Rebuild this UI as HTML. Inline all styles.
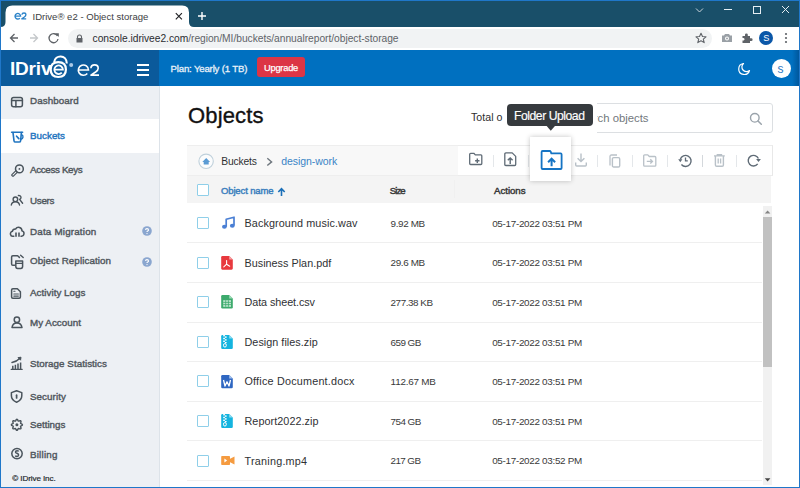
<!DOCTYPE html><html><head><meta charset="utf-8"><style>
*{box-sizing:border-box;margin:0;padding:0}
html,body{width:800px;height:488px;overflow:hidden;background:#fff;font-family:"Liberation Sans",sans-serif}
.a{position:absolute;white-space:nowrap;line-height:normal}
svg.a{overflow:visible}
</style></head><body>
<div class="a" style="left:0;top:0;width:800px;height:27px;background:#194f69"></div>
<svg class="a" style="left:0px;top:0px;" width="200" height="27" viewBox="0 0 200 27"><path d="M0.5,27 Q5.5,27 5.5,22 L5.5,12.5 Q5.5,5.6 12.4,5.6 L182.2,5.6 Q189,5.6 189,12.5 L189,22 Q189,27 194,27 Z" fill="#fff"/></svg>
<svg class="a" style="left:0px;top:0px;" width="40" height="27" viewBox="0 0 40 27"><path d="M15,16.1 H20.6 A2.8,2.8 0 1 0 19.8,18.2" stroke="#2a82c8" stroke-width="1.3" fill="none"/><path d="M21.9,14.8 Q22.1,13 24,13 Q25.9,13 25.9,14.8 Q25.9,16 24.4,17 L21.8,18.8 H26.2" stroke="#2a82c8" stroke-width="1.3" fill="none" stroke-linejoin="round"/></svg>
<div class="a" style="left:32.5px;top:10.86px;font-size:9.55px;color:#3c4043;font-weight:400;letter-spacing:0px;">IDrive® e2 - Object storage</div>
<svg class="a" style="left:174px;top:12px;" width="10" height="10" viewBox="0 0 10 10"><path d="M1.8,1.2 L7.9,7.3 M7.9,1.2 L1.8,7.3" stroke="#202124" stroke-width="1.15"/></svg>
<svg class="a" style="left:197px;top:11px;" width="10" height="10" viewBox="0 0 10 10"><path d="M5,1 V9 M1,5 H9" stroke="#fff" stroke-width="1.4"/></svg>
<svg class="a" style="left:694px;top:6px;" width="100" height="10" viewBox="0 0 100 10"><path d="M2,2.5 L5.5,6 L9,2.5" stroke="#c9d3da" stroke-width="1" fill="none"/><path d="M30,3.5 H38" stroke="#e6eef3" stroke-width="1"/><rect x="59.5" y="0.5" width="7" height="7" stroke="#e6eef3" stroke-width="1" fill="none"/><path d="M88,0 L95,7 M95,0 L88,7" stroke="#e6eef3" stroke-width="1"/></svg>
<div class="a" style="left:0;top:27px;width:800px;height:23px;background:#fff"></div>
<svg class="a" style="left:8px;top:31px;" width="56" height="14" viewBox="0 0 56 14"><path d="M10,7 H2.5 M6.5,3 L2.5,7 L6.5,11" stroke="#5f6368" stroke-width="1.3" fill="none"/><path d="M22,7 H29.5 M25.5,3 L29.5,7 L25.5,11" stroke="#c4c7ca" stroke-width="1.3" fill="none"/><path d="M49.5,5 A4.5,4.5 0 1 0 50,8" stroke="#5f6368" stroke-width="1.3" fill="none"/><path d="M47,2.2 L50.8,2.2 L50.8,6 Z" fill="#5f6368"/></svg>
<div class="a" style="left:68px;top:29px;width:644px;height:19px;background:#f1f3f4;border-radius:10px"></div>
<svg class="a" style="left:75px;top:34px;" width="9" height="9" viewBox="0 0 9 9"><path d="M2.5,4 V3 A2,2 0 0 1 6.5,3 V4" stroke="#5f6368" stroke-width="1.1" fill="none"/><rect x="1.5" y="4" width="6" height="4.5" fill="#5f6368"/></svg>
<div class="a" style="left:92.6px;top:32.92px;font-size:10.25px;color:#2a2c30;font-weight:400;letter-spacing:-0.035px;">console.idrivee2.com<span style="color:#606368">/region/MI/buckets/annualreport/object-storage</span></div>
<svg class="a" style="left:694px;top:31px;" width="100" height="14" viewBox="0 0 100 14"><path d="M7,2.2 L8.5,5.5 L12,5.8 L9.3,8.1 L10.2,11.6 L7,9.7 L3.8,11.6 L4.7,8.1 L2,5.8 L5.5,5.5 Z" stroke="#5f6368" stroke-width="1.1" fill="none" stroke-linejoin="round"/><path d="M28,4.5 H30 L31,3 H35 L36,4.5 H38 V11 H28 Z" fill="#9aa0a6"/><circle cx="33" cy="7.6" r="2" fill="#fff"/><circle cx="33" cy="7.6" r="1" fill="#9aa0a6"/><path d="M48.5,5 H51 V3.8 A1.4,1.4 0 0 1 53.8,3.8 V5 H56 V7.3 H57.2 A1.4,1.4 0 0 1 57.2,10.1 H56 V12 H48.5 V9.5 H49.6 A1.3,1.3 0 0 0 49.6,7 H48.5 Z" fill="#5f6368"/><circle cx="72" cy="7" r="7" fill="#0b57a8"/><circle cx="92" cy="3" r="1.1" fill="#5f6368"/><circle cx="92" cy="7" r="1.1" fill="#5f6368"/><circle cx="92" cy="11" r="1.1" fill="#5f6368"/></svg>
<div class="a" style="left:763.2px;top:33.27px;font-size:9.2px;color:#fff;font-weight:400;letter-spacing:0px;">S</div>
<div class="a" style="left:0;top:50px;width:800px;height:36px;background:#0070c0"></div>
<div class="a" style="left:0;top:50px;width:159px;height:36px;background:#0b5a9b"></div>
<div class="a" style="left:9.9px;top:58.30px;font-size:19px;color:#fff;font-weight:700;letter-spacing:-0.15px;">IDriv</div>
<svg class="a" style="left:0px;top:50px;" width="110" height="36" viewBox="0 0 110 36"><path d="M54.2,12.2 C55,4.6 66.6,4.2 66.8,13.6" stroke="#fff" stroke-width="2.1" fill="none"/><path d="M50.7,19.6 Q50.7,12.2 58.3,12.2 Q65.9,12.2 65.9,19.6 Q65.9,27 58.3,27 Q50.7,27 50.7,19.6 Z" stroke="#fff" stroke-width="2.2" fill="none"/><path d="M54.3,19.6 H62.9 A4.3,4.3 0 1 0 61.8,22.6" stroke="#fff" stroke-width="1.8" fill="none"/><circle cx="71.2" cy="15" r="2" fill="#a9c8e6"/><path d="M78.3,20 H88.5 A5.1,5.1 0 1 0 87.3,23.4" stroke="#fff" stroke-width="1.6" fill="none"/><path d="M90.9,18.2 Q91,14.9 94.6,14.9 Q98.2,14.9 98.2,18.2 Q98.2,20.2 95.6,22 L90.9,25.1 H99" stroke="#fff" stroke-width="1.6" fill="none" stroke-linejoin="round"/></svg>
<svg class="a" style="left:137px;top:64px;" width="12" height="12" viewBox="0 0 12 12"><path d="M0,1 H12 M0,6 H12 M0,11 H12" stroke="#fff" stroke-width="1.8"/></svg>
<div class="a" style="left:170.5px;top:63.31px;font-size:9.6px;color:#e8f1f9;font-weight:400;letter-spacing:-0.16px;-webkit-text-stroke:0.3px #e8f1f9">Plan: Yearly (1 TB)</div>
<div class="a" style="left:257px;top:57px;width:48px;height:20px;background:#dc3545;border-radius:3px"></div>
<div class="a" style="left:264.0px;top:62.58px;font-size:9.3px;color:#fff;font-weight:400;letter-spacing:-0.228px;-webkit-text-stroke:0.25px #fff">Upgrade</div>
<div class="a" style="left:792px;top:50px;width:7px;height:36px;background:linear-gradient(90deg,rgba(0,40,90,0),rgba(0,40,90,0.35))"></div>
<svg class="a" style="left:737px;top:62px;" width="14" height="14" viewBox="0 0 14 14"><path d="M6.5,1.5 A5.5,5.5 0 1 0 12.5,8.5 A4.6,4.6 0 0 1 6.5,1.5 Z" stroke="#fff" stroke-width="1.2" fill="none" stroke-linejoin="round"/></svg>
<div class="a" style="left:772px;top:59px;width:19px;height:19px;background:#fff;border-radius:50%"></div>
<div class="a" style="left:777.6px;top:62.14px;font-size:12px;color:#2a78c4;font-weight:400;letter-spacing:0px;">s</div>
<div class="a" style="left:0;top:86px;width:160px;height:402px;background:#edf0f4;border-right:1px solid #dde3e9"></div>
<div class="a" style="left:0;top:119px;width:159px;height:34px;background:#fff"></div>
<div id="navs">
<div class="a" style="left:30.0px;top:95.43px;font-size:9.8px;color:#50575d;font-weight:400;letter-spacing:0.085px;-webkit-text-stroke:0.4px #50575d">Dashboard</div>
<div class="a" style="left:30.0px;top:130.33px;font-size:9.8px;color:#1f74c0;font-weight:400;letter-spacing:0.027px;-webkit-text-stroke:0.4px #1f74c0">Buckets</div>
<div class="a" style="left:30.0px;top:164.43px;font-size:9.8px;color:#50575d;font-weight:400;letter-spacing:-0.34px;-webkit-text-stroke:0.4px #50575d">Access Keys</div>
<div class="a" style="left:30.0px;top:195.13px;font-size:9.8px;color:#50575d;font-weight:400;letter-spacing:-0.27px;-webkit-text-stroke:0.4px #50575d">Users</div>
<div class="a" style="left:30.0px;top:225.83px;font-size:9.8px;color:#50575d;font-weight:400;letter-spacing:0.196px;-webkit-text-stroke:0.4px #50575d">Data Migration</div>
<div class="a" style="left:30.0px;top:255.43px;font-size:9.8px;color:#50575d;font-weight:400;letter-spacing:0.087px;-webkit-text-stroke:0.4px #50575d">Object Replication</div>
<div class="a" style="left:30.0px;top:287.43px;font-size:9.8px;color:#50575d;font-weight:400;letter-spacing:0.039px;-webkit-text-stroke:0.4px #50575d">Activity Logs</div>
<div class="a" style="left:30.0px;top:316.63px;font-size:9.8px;color:#50575d;font-weight:400;letter-spacing:0.037px;-webkit-text-stroke:0.4px #50575d">My Account</div>
<div class="a" style="left:30.0px;top:357.63px;font-size:9.8px;color:#50575d;font-weight:400;letter-spacing:0.039px;-webkit-text-stroke:0.4px #50575d">Storage Statistics</div>
<div class="a" style="left:30.0px;top:391.33px;font-size:9.8px;color:#50575d;font-weight:400;letter-spacing:0.06px;-webkit-text-stroke:0.4px #50575d">Security</div>
<div class="a" style="left:30.0px;top:419.43px;font-size:9.8px;color:#50575d;font-weight:400;letter-spacing:-0.004px;-webkit-text-stroke:0.4px #50575d">Settings</div>
<div class="a" style="left:30.0px;top:448.63px;font-size:9.8px;color:#50575d;font-weight:400;letter-spacing:0.206px;-webkit-text-stroke:0.4px #50575d">Billing</div>
</div>
<div class="a" style="left:12.3px;top:474.47px;font-size:8.1px;color:#25292d;font-weight:400;letter-spacing:-0.106px;-webkit-text-stroke:0.2px #25292d">© IDrive Inc.</div>
<svg class="a" style="left:0;top:0" width="160" height="488" viewBox="0 0 160 488">
<g fill="none" stroke="#4a545c" stroke-width="1.5" stroke-linejoin="round" stroke-linecap="round">
 <rect x="11.6" y="97.4" width="10.8" height="9.4" rx="2"/>
 <path d="M11.6,100.6 H22.4 M15.9,100.6 V106.8"/>
 <circle cx="19.4" cy="168.9" r="3.9" stroke-width="1.5"/>
 <circle cx="19.4" cy="168.9" r="0.9" fill="#4a545c" stroke="none"/>
 <path d="M16.2,170.4 L11.9,174.7 Q11.5,175.1 11.9,175.5 L12.6,176.2 Q13,176.6 13.4,176.2 L17.7,171.9" stroke-width="1.2"/>
 <circle cx="15.4" cy="199.3" r="2.3" stroke-width="1.4"/>
 <path d="M11.3,205 Q11.8,201.8 15.4,201.8 Q19,201.8 19.5,205" stroke-width="1.4"/>
 <path d="M18.4,195.5 Q21,195.4 21,197.5 Q21,198.8 19.6,199.4 L22.6,203.3" stroke-width="1.4"/>
 <path d="M13.8,236.2 H13.4 A2.5,2.5 0 0 1 12.4,231.3 Q12.8,228.8 15.6,229 Q17,226.9 19.5,227.5 Q22,228.3 22,230.9 A2.7,2.7 0 0 1 21.5,236.2 H21" stroke-width="1.5"/>
 <path d="M16,232.4 V236.8 M19,232.4 V236.8" stroke-width="1.6" stroke-linecap="butt"/>
 <path d="M14.6,265.3 H12.8 Q11.6,265.3 11.6,264 V257 Q11.6,255.8 12.8,255.8 H17.6 L19.4,257.4" stroke-width="1.5"/>
 <path d="M15.8,261 H22.6 V266.6 Q22.6,268.4 20.8,268.4 H17.6 Q15.8,268.4 15.8,266.6 Z" stroke-width="1.5"/>
 <path d="M16,263.4 H22.4" stroke-width="1.2"/>
 <path d="M20.6,255.2 L23.2,257.6" stroke-width="1.4"/>
 <path d="M12.8,288.8 H17.4 L20.4,291.8 V297 Q20.4,298.2 19.2,298.2 H12.8 Q11.6,298.2 11.6,297 V290 Q11.6,288.8 12.8,288.8 Z" stroke-width="1.5"/>
 <path d="M13.8,294 H18.4 M13.8,296.1 H18.4 M13.8,291.2 H15" stroke-width="1.1"/>
 <circle cx="16.9" cy="319.8" r="2.7" stroke-width="1.5"/>
 <path d="M12,327.6 Q12.6,323 16.9,323 Q21.3,323 22,327.6 Z" stroke-width="1.5"/>
 <path d="M11.2,369.3 H22.2" stroke-width="1.3"/>
 <path d="M12.8,369 V365.8 M15.4,369 V364.8 M18,369 V363.6 M20.6,369 V362.6" stroke-width="1.5" stroke-linecap="butt"/>
 <path d="M12,362.4 Q16.4,361.8 20,358.2" stroke-width="1.5"/>
 <path d="M18.4,357.6 L21,357.2 L20.6,359.8 Z" fill="#4a545c" stroke-width="1"/>
 <path d="M16.6,390.8 L21.8,392.6 V395.8 Q21.8,400.2 16.6,402.2 Q11.4,400.2 11.4,395.8 V392.6 Z" stroke-width="1.5"/>
 <path d="M16.6,395.2 V398" stroke-width="1.7"/>
 <circle cx="16.9" cy="424.8" r="1.5" fill="#4a545c" stroke="none"/>
 <path d="M22.40,424.80 L22.29,425.15 L21.98,425.47 L21.56,425.73 L21.13,425.93 L20.78,426.12 L20.60,426.33 L20.58,426.61 L20.69,426.99 L20.85,427.44 L20.97,427.92 L20.96,428.36 L20.79,428.69 L20.46,428.86 L20.02,428.87 L19.54,428.75 L19.09,428.59 L18.71,428.48 L18.43,428.50 L18.22,428.68 L18.03,429.03 L17.83,429.46 L17.57,429.88 L17.25,430.19 L16.90,430.30 L16.55,430.19 L16.23,429.88 L15.97,429.46 L15.77,429.03 L15.58,428.68 L15.37,428.50 L15.09,428.48 L14.71,428.59 L14.26,428.75 L13.78,428.87 L13.34,428.86 L13.01,428.69 L12.84,428.36 L12.83,427.92 L12.95,427.44 L13.11,426.99 L13.22,426.61 L13.20,426.33 L13.02,426.12 L12.67,425.93 L12.24,425.73 L11.82,425.47 L11.51,425.15 L11.40,424.80 L11.51,424.45 L11.82,424.13 L12.24,423.87 L12.67,423.67 L13.02,423.48 L13.20,423.27 L13.22,422.99 L13.11,422.61 L12.95,422.16 L12.83,421.68 L12.84,421.24 L13.01,420.91 L13.34,420.74 L13.78,420.73 L14.26,420.85 L14.71,421.01 L15.09,421.12 L15.37,421.10 L15.58,420.92 L15.77,420.57 L15.97,420.14 L16.23,419.72 L16.55,419.41 L16.90,419.30 L17.25,419.41 L17.57,419.72 L17.83,420.14 L18.03,420.57 L18.22,420.92 L18.43,421.10 L18.71,421.12 L19.09,421.01 L19.54,420.85 L20.02,420.73 L20.46,420.74 L20.79,420.91 L20.96,421.24 L20.97,421.68 L20.85,422.16 L20.69,422.61 L20.58,422.99 L20.60,423.27 L20.78,423.48 L21.13,423.67 L21.56,423.87 L21.98,424.13 L22.29,424.45 L22.40,424.80 Z" stroke-width="1.45"/>
 <circle cx="17" cy="453.6" r="5.2" stroke-width="1.5"/>
</g>
<path d="M18.6,451.5 Q18.3,450.7 17,450.7 Q15.5,450.7 15.5,451.9 Q15.5,452.9 17,453.3 Q18.6,453.8 18.6,455 Q18.6,456.4 17,456.4 Q15.7,456.4 15.3,455.6" stroke="#4a545c" stroke-width="1.5" fill="none"/>
<g fill="none" stroke="#1f74c0" stroke-linecap="round" stroke-linejoin="round">
 <path d="M11.6,132.2 H22.6" stroke-width="1.6"/>
 <path d="M13,132.6 L14,140.8 Q14.2,142 15.4,142 H19.2 Q20.4,142 20.6,140.8 L21.4,132.6" stroke-width="1.6"/>
 <path d="M16.6,136.2 L18.8,138.6" stroke-width="1.7"/>
 <path d="M21.6,134.6 A2.5,2.5 0 0 1 21,139.3" stroke-width="1.4"/>
</g>
</svg>
<svg class="a" style="left:142.4px;top:226px;" width="10" height="10" viewBox="0 0 10 10"><circle cx="5" cy="5" r="4.8" fill="#8aa6cf"/><path d="M3.5,3.9 Q3.6,2.6 5,2.6 Q6.5,2.6 6.5,3.9 Q6.5,4.7 5.6,5.1 Q5,5.4 5,6.1" stroke="#fff" stroke-width="1.1" fill="none"/><circle cx="5" cy="7.6" r="0.65" fill="#fff"/></svg>
<svg class="a" style="left:142.4px;top:256.8px;" width="10" height="10" viewBox="0 0 10 10"><circle cx="5" cy="5" r="4.8" fill="#8aa6cf"/><path d="M3.5,3.9 Q3.6,2.6 5,2.6 Q6.5,2.6 6.5,3.9 Q6.5,4.7 5.6,5.1 Q5,5.4 5,6.1" stroke="#fff" stroke-width="1.1" fill="none"/><circle cx="5" cy="7.6" r="0.65" fill="#fff"/></svg>
<div class="a" style="left:188.0px;top:102.79px;font-size:22px;color:#111;font-weight:400;letter-spacing:0.153px;-webkit-text-stroke:0.35px #111">Objects</div>
<div class="a" style="left:560px;top:103px;width:213px;height:30px;border:1px solid #dcdfe2;border-radius:3px;background:#fff"></div>
<div class="a" style="left:573.7296328125px;top:112.47px;font-size:11.3px;color:#72787d;font-weight:400;letter-spacing:0px;">Search objects</div>
<svg class="a" style="left:749px;top:112px;" width="14" height="14" viewBox="0 0 14 14"><circle cx="5.8" cy="5.8" r="4.3" stroke="#9aa3ab" stroke-width="1.4" fill="none"/><path d="M9,9 L12.3,12.3" stroke="#9aa3ab" stroke-width="1.5" stroke-linecap="round"/></svg>
<div class="a" style="left:471.0px;top:110.61px;font-size:10.6px;color:#2e2e2e;font-weight:400;letter-spacing:0.047px;">Total o</div>
<div class="a" style="left:504px;top:96px;width:93px;height:40px;background:#fff"></div>
<div class="a" style="left:187px;top:145px;width:586px;height:31px;background:#f8f8f8;border-top:1px solid #eeeeee;border-bottom:1px solid #eeeeee"></div>
<div class="a" style="left:458px;top:145px;width:315px;height:31px;background:#fff;border:1px solid #ececec;border-left:none;border-right-color:#e8e8e8"></div>
<svg class="a" style="left:198px;top:153px;" width="17" height="17" viewBox="0 0 17 17"><circle cx="8.1" cy="8.3" r="7.2" stroke="#bfd0db" stroke-width="1.1" fill="#fbfcfd"/><path d="M4.3,8.9 L8.2,4.9 L12.1,8.9 H10.7 V11.4 H5.7 V8.9 Z" fill="#5a9bd4"/></svg>
<div class="a" style="left:221.2px;top:155.58px;font-size:10.3px;color:#2f3133;font-weight:400;letter-spacing:-0.161px;">Buckets</div>
<svg class="a" style="left:265px;top:157px;" width="10" height="10" viewBox="0 0 10 10"><path d="M2.3,1.3 L6.6,4.9 L2.3,8.5" stroke="#6f777e" stroke-width="1.4" fill="none"/></svg>
<div class="a" style="left:281.2px;top:155.40px;font-size:10.5px;color:#3a84c6;font-weight:400;letter-spacing:-0.065px;">design-work</div>
<svg class="a" style="left:469px;top:152px;" width="16" height="16" viewBox="0 0 16 16"><path d="M0.7,11.6 V2.2 Q0.7,1.3 1.6,1.3 H4.8 L6.3,2.9 H11.9 Q12.8,2.9 12.8,3.8 V11.6 Q12.8,12.5 11.9,12.5 H1.6 Q0.7,12.5 0.7,11.6 Z" stroke="#5f6b76" stroke-width="1.3" fill="none" stroke-linejoin="round"/><path d="M8.3,6.6 V11 M6.1,8.8 H10.5" stroke="#5f6b76" stroke-width="1.4"/></svg>
<svg class="a" style="left:504px;top:152px;" width="16" height="16" viewBox="0 0 16 16"><path d="M0.8,12.4 V2 Q0.8,0.9 1.9,0.9 H8.2 L11.7,4.4 V12.4 Q11.7,13.5 10.6,13.5 H1.9 Q0.8,13.5 0.8,12.4 Z" stroke="#5f6b76" stroke-width="1.3" fill="none" stroke-linejoin="round"/><path d="M6.2,12 V6 M3.8,8.3 L6.2,5.9 L8.6,8.3" stroke="#5f6b76" stroke-width="1.4" fill="none"/></svg>
<svg class="a" style="left:575px;top:153px;" width="16" height="16" viewBox="0 0 16 16"><path d="M6,0.5 V8.5 M2.6,5.2 L6,8.6 L9.4,5.2" stroke="#b9c1c8" stroke-width="1.4" fill="none"/><path d="M0.7,9.5 V12 Q0.7,13 1.7,13 H10.3 Q11.3,13 11.3,12 V9.5" stroke="#b9c1c8" stroke-width="1.4" fill="none"/></svg>
<svg class="a" style="left:609px;top:154px;" width="16" height="16" viewBox="0 0 16 16"><path d="M1,11.5 V2.5 Q1,1 2.5,1 H8" stroke="#b9c1c8" stroke-width="1.3" fill="none"/><rect x="3.4" y="3.6" width="7.3" height="9.4" rx="1.3" stroke="#b9c1c8" stroke-width="1.4" fill="none"/></svg>
<svg class="a" style="left:643px;top:154px;" width="16" height="16" viewBox="0 0 16 16"><path d="M0.7,11.2 V1.8 Q0.7,0.9 1.6,0.9 H4.8 L6.3,2.5 H11.9 Q12.8,2.5 12.8,3.4 V11.2 Q12.8,12.1 11.9,12.1 H1.6 Q0.7,12.1 0.7,11.2 Z" stroke="#b9c1c8" stroke-width="1.3" fill="none" stroke-linejoin="round"/><path d="M3.8,7.4 H9.3 M7.3,5.3 L9.4,7.4 L7.3,9.5" stroke="#b9c1c8" stroke-width="1.4" fill="none"/></svg>
<svg class="a" style="left:678px;top:154.4px;" width="16" height="16" viewBox="0 0 16 16"><path d="M2.3,5.4 A5.5,5.5 0 1 1 3.4,10.5" stroke="#5f6b76" stroke-width="1.4" fill="none"/><path d="M0.2,5.2 L4.4,5.2 L2.3,8.2 Z" fill="#5f6b76"/><path d="M7.5,3.4 V6.8 H9.8" stroke="#5f6b76" stroke-width="1.3" fill="none"/></svg>
<svg class="a" style="left:714px;top:154px;" width="16" height="16" viewBox="0 0 16 16"><path d="M0,1.8 H10.8 M3.3,1.6 V0.6 H7.5 V1.6" stroke="#b9c1c8" stroke-width="1.3" fill="none"/><path d="M1.4,2 V11 Q1.4,12.3 2.7,12.3 H8.1 Q9.4,12.3 9.4,11 V2" stroke="#b9c1c8" stroke-width="1.4" fill="none"/><path d="M4.2,4.6 V9.5 M6.6,4.6 V9.5" stroke="#b9c1c8" stroke-width="1.3"/></svg>
<svg class="a" style="left:747px;top:154px;" width="16" height="16" viewBox="0 0 16 16"><path d="M10.7,9.9 A5.3,5.3 0 1 1 11.4,4.6" stroke="#5f6b76" stroke-width="1.4" fill="none"/><path d="M9.1,5 L13.9,5 L11.5,8.1 Z" fill="#5f6b76"/></svg>
<div class="a" style="left:493.0px;top:155px;width:1px;height:12px;background:#e4e7ea"></div>
<div class="a" style="left:527.5px;top:155px;width:1px;height:12px;background:#e4e7ea"></div>
<div class="a" style="left:597.0px;top:155px;width:1px;height:12px;background:#e4e7ea"></div>
<div class="a" style="left:632.0px;top:155px;width:1px;height:12px;background:#e4e7ea"></div>
<div class="a" style="left:667.0px;top:155px;width:1px;height:12px;background:#e4e7ea"></div>
<div class="a" style="left:701.7px;top:155px;width:1px;height:12px;background:#d4d8dc"></div>
<div class="a" style="left:736.0px;top:155px;width:1px;height:12px;background:#e4e7ea"></div>
<div class="a" style="left:187px;top:176px;width:584px;height:27px;background:#f4f4f4"></div>
<div class="a" style="left:197px;top:184px;width:12px;height:12px;border:1px solid #8fcfe9;border-radius:1px;background:#fff"></div>
<div class="a" style="left:221.0px;top:185.10px;font-size:9.5px;color:#3c7fbe;font-weight:400;letter-spacing:-0.137px;-webkit-text-stroke:0.45px #3c7fbe">Object name</div>
<svg class="a" style="left:277px;top:187px;" width="9" height="10" viewBox="0 0 9 10"><path d="M4.5,9 V2 M1.3,5 L4.5,1.7 L7.7,5" stroke="#1a6fb8" stroke-width="1.6" fill="none"/></svg>
<div class="a" style="left:389.7px;top:184.92px;font-size:9.7px;color:#383838;font-weight:400;letter-spacing:-0.955px;-webkit-text-stroke:0.45px #383838">Size</div>
<div class="a" style="left:494.0px;top:184.92px;font-size:9.7px;color:#383838;font-weight:400;letter-spacing:-0.036px;-webkit-text-stroke:0.45px #383838">Actions</div>
<div class="a" style="left:453.5px;top:180px;width:1px;height:18px;background:#f0f0f0"></div>
<div class="a" style="left:187px;top:242.4px;width:575px;height:1px;background:#efefef"></div>
<div class="a" style="left:197px;top:217.0px;width:12px;height:12px;border:1px solid #8fcfe9;border-radius:1px;background:#fff"></div>
<svg class="a" style="left:221px;top:215.5px;" width="16" height="16" viewBox="0 0 16 16"><path d="M5.2,10.7 V3.2 L13,1.2 V9.6" stroke="#4a7fd4" stroke-width="1.7" fill="none" stroke-linejoin="round"/><ellipse cx="3.4" cy="10.8" rx="2.4" ry="2" fill="#4a7fd4"/><ellipse cx="11.3" cy="9.7" rx="2.4" ry="2" fill="#4a7fd4"/></svg>
<div class="a" style="left:244.5px;top:216.93px;font-size:10.8px;color:#2f3134;font-weight:400;letter-spacing:0.101px;">Background music.wav</div>
<div class="a" style="left:390.6px;top:217.74px;font-size:9.9px;color:#3a3a3a;font-weight:400;letter-spacing:-0.38px;">9.92 MB</div>
<div class="a" style="left:492.2px;top:217.74px;font-size:9.9px;color:#3a3a3a;font-weight:400;letter-spacing:-0.305px;">05-17-2022 03:51 PM</div>
<div class="a" style="left:187px;top:282.0px;width:575px;height:1px;background:#efefef"></div>
<div class="a" style="left:197px;top:256.6px;width:12px;height:12px;border:1px solid #8fcfe9;border-radius:1px;background:#fff"></div>
<svg class="a" style="left:221.2px;top:255.8px;" width="16" height="16" viewBox="0 0 16 16"><path d="M0.2,1.2 Q0.2,0 1.4,0 H8.2 L11.8,3.6 V12.6 Q11.8,13.7 10.6,13.7 H1.4 Q0.2,13.7 0.2,12.6 Z" fill="#e8393e"/><path d="M8.2,0 V3.6 H11.8 Z" fill="#f5a3a5"/><path d="M5.6,4.6 V8.2 M5.6,8.2 L2.8,10.9 M5.6,8.2 L8.7,10.2" stroke="#fff" stroke-width="1.1" stroke-linecap="round" fill="none"/></svg>
<div class="a" style="left:244.5px;top:256.53px;font-size:10.8px;color:#2f3134;font-weight:400;letter-spacing:0.018px;">Business Plan.pdf</div>
<div class="a" style="left:390.6px;top:257.34px;font-size:9.9px;color:#3a3a3a;font-weight:400;letter-spacing:-0.38px;">29.6 MB</div>
<div class="a" style="left:492.2px;top:257.34px;font-size:9.9px;color:#3a3a3a;font-weight:400;letter-spacing:-0.305px;">05-17-2022 03:51 PM</div>
<div class="a" style="left:187px;top:321.6px;width:575px;height:1px;background:#efefef"></div>
<div class="a" style="left:197px;top:296.2px;width:12px;height:12px;border:1px solid #8fcfe9;border-radius:1px;background:#fff"></div>
<svg class="a" style="left:221.2px;top:295.3px;" width="16" height="16" viewBox="0 0 16 16"><path d="M0.2,1.2 Q0.2,0 1.4,0 H8.2 L11.8,3.6 V12.3 Q11.8,13.5 10.6,13.5 H1.4 Q0.2,13.5 0.2,12.3 Z" fill="#3daa6d"/><path d="M8.2,0 V3.6 H11.8 Z" fill="#9fdcb7"/><rect x="2.2" y="5.2" width="7.8" height="6.6" fill="#c0e6cf"/><path d="M4.7,5.2 V11.8 M7.4,5.2 V11.8 M2.2,7.4 H10 M2.2,9.6 H10" stroke="#3daa6d" stroke-width="0.8"/></svg>
<div class="a" style="left:244.5px;top:296.13px;font-size:10.8px;color:#2f3134;font-weight:400;letter-spacing:-0.072px;">Data sheet.csv</div>
<div class="a" style="left:390.6px;top:296.94px;font-size:9.9px;color:#3a3a3a;font-weight:400;letter-spacing:-0.467px;">277.38 KB</div>
<div class="a" style="left:492.2px;top:296.94px;font-size:9.9px;color:#3a3a3a;font-weight:400;letter-spacing:-0.305px;">05-17-2022 03:51 PM</div>
<div class="a" style="left:187px;top:361.2px;width:575px;height:1px;background:#efefef"></div>
<div class="a" style="left:197px;top:335.8px;width:12px;height:12px;border:1px solid #8fcfe9;border-radius:1px;background:#fff"></div>
<svg class="a" style="left:221px;top:334.8px;" width="16" height="16" viewBox="0 0 16 16"><path d="M0.2,1.2 Q0.2,0 1.4,0 H8.2 L11.8,3.6 V12.8 Q11.8,14 10.6,14 H1.4 Q0.2,14 0.2,12.8 Z" fill="#14b4df"/><path d="M8.2,0 V3.6 H11.8 Z" fill="#8fdcf2"/><g fill="#fff"><rect x="2.2" y="0" width="1.7" height="1.4"/><rect x="3.9" y="1.4" width="1.7" height="1.4"/><rect x="2.2" y="2.8" width="1.7" height="1.4"/><rect x="3.9" y="4.2" width="1.7" height="1.4"/><rect x="2.2" y="5.6" width="1.7" height="1.4"/><rect x="3.9" y="7" width="1.7" height="1.2"/></g><rect x="2.5" y="8.6" width="2.8" height="3.4" rx="1.3" stroke="#fff" stroke-width="1" fill="none"/></svg>
<div class="a" style="left:244.5px;top:335.73px;font-size:10.8px;color:#2f3134;font-weight:400;letter-spacing:0.038px;">Design files.zip</div>
<div class="a" style="left:390.6px;top:336.54px;font-size:9.9px;color:#3a3a3a;font-weight:400;letter-spacing:-0.572px;">659 GB</div>
<div class="a" style="left:492.2px;top:336.54px;font-size:9.9px;color:#3a3a3a;font-weight:400;letter-spacing:-0.305px;">05-17-2022 03:51 PM</div>
<div class="a" style="left:187px;top:400.8px;width:575px;height:1px;background:#efefef"></div>
<div class="a" style="left:197px;top:375.4px;width:12px;height:12px;border:1px solid #8fcfe9;border-radius:1px;background:#fff"></div>
<svg class="a" style="left:221.3px;top:374.7px;" width="16" height="16" viewBox="0 0 16 16"><path d="M0.2,1.2 Q0.2,0 1.4,0 H8.2 L11.8,3.6 V12.1 Q11.8,13.3 10.6,13.3 H1.4 Q0.2,13.3 0.2,12.1 Z" fill="#2f67c2"/><path d="M8.2,0 V3.6 H11.8 Z" fill="#a6c3ee"/><path d="M2.5,5 L4,11 L6,6.8 L8,11 L9.5,5" stroke="#fff" stroke-width="1.3" fill="none" stroke-linejoin="round"/></svg>
<div class="a" style="left:244.5px;top:375.33px;font-size:10.8px;color:#2f3134;font-weight:400;letter-spacing:0.208px;">Office Document.docx</div>
<div class="a" style="left:390.6px;top:376.14px;font-size:9.9px;color:#3a3a3a;font-weight:400;letter-spacing:-0.216px;">112.67 MB</div>
<div class="a" style="left:492.2px;top:376.14px;font-size:9.9px;color:#3a3a3a;font-weight:400;letter-spacing:-0.305px;">05-17-2022 03:51 PM</div>
<div class="a" style="left:187px;top:440.4px;width:575px;height:1px;background:#efefef"></div>
<div class="a" style="left:197px;top:415.0px;width:12px;height:12px;border:1px solid #8fcfe9;border-radius:1px;background:#fff"></div>
<svg class="a" style="left:221px;top:414.0px;" width="16" height="16" viewBox="0 0 16 16"><path d="M0.2,1.2 Q0.2,0 1.4,0 H8.2 L11.8,3.6 V12.8 Q11.8,14 10.6,14 H1.4 Q0.2,14 0.2,12.8 Z" fill="#14b4df"/><path d="M8.2,0 V3.6 H11.8 Z" fill="#8fdcf2"/><g fill="#fff"><rect x="2.2" y="0" width="1.7" height="1.4"/><rect x="3.9" y="1.4" width="1.7" height="1.4"/><rect x="2.2" y="2.8" width="1.7" height="1.4"/><rect x="3.9" y="4.2" width="1.7" height="1.4"/><rect x="2.2" y="5.6" width="1.7" height="1.4"/><rect x="3.9" y="7" width="1.7" height="1.2"/></g><rect x="2.5" y="8.6" width="2.8" height="3.4" rx="1.3" stroke="#fff" stroke-width="1" fill="none"/></svg>
<div class="a" style="left:244.5px;top:414.93px;font-size:10.8px;color:#2f3134;font-weight:400;letter-spacing:0.06px;">Report2022.zip</div>
<div class="a" style="left:390.6px;top:415.74px;font-size:9.9px;color:#3a3a3a;font-weight:400;letter-spacing:-0.572px;">754 GB</div>
<div class="a" style="left:492.2px;top:415.74px;font-size:9.9px;color:#3a3a3a;font-weight:400;letter-spacing:-0.305px;">05-17-2022 03:51 PM</div>
<div class="a" style="left:187px;top:480.0px;width:575px;height:1px;background:#efefef"></div>
<div class="a" style="left:197px;top:454.6px;width:12px;height:12px;border:1px solid #8fcfe9;border-radius:1px;background:#fff"></div>
<svg class="a" style="left:221px;top:455.9px;" width="16" height="16" viewBox="0 0 16 16"><rect x="0.2" y="0" width="8.8" height="9" rx="0.8" fill="#f59b40"/><path d="M8.6,3 L13.5,0.6 V8.4 L8.6,6 Z" fill="#f59b40"/><path d="M3.4,2.6 L6.1,4.5 L3.4,6.4 Z" fill="#fff"/></svg>
<div class="a" style="left:244.5px;top:454.53px;font-size:10.8px;color:#2f3134;font-weight:400;letter-spacing:0.239px;">Traning.mp4</div>
<div class="a" style="left:390.6px;top:455.34px;font-size:9.9px;color:#3a3a3a;font-weight:400;letter-spacing:-0.612px;">217 GB</div>
<div class="a" style="left:492.2px;top:455.34px;font-size:9.9px;color:#3a3a3a;font-weight:400;letter-spacing:-0.305px;">05-17-2022 03:52 PM</div>
<div class="a" style="left:762.5px;top:206px;width:9.5px;height:279px;background:#f1f1f1"></div>
<div class="a" style="left:762.5px;top:217.2px;width:9.5px;height:149.4px;background:#c1c1c1"></div>
<svg class="a" style="left:764px;top:209px;" width="8" height="6" viewBox="0 0 8 6"><path d="M0.8,4.6 L3.6,1.4 L6.4,4.6 Z" fill="#858585"/></svg>
<svg class="a" style="left:764px;top:477px;" width="8" height="6" viewBox="0 0 8 6"><path d="M0.8,1.2 L3.6,4.4 L6.4,1.2 Z" fill="#444"/></svg>
<div class="a" style="left:530px;top:137px;width:41px;height:44px;background:#fff;box-shadow:0 0 5px rgba(0,0,0,0.24)"></div>
<svg class="a" style="left:540px;top:149px;" width="24" height="24" viewBox="0 0 24 24"><path d="M1.6,19 V3 Q1.6,2 2.6,2 H9.6 Q10.4,2 10.8,2.8 L11.3,4.4 H20.6 Q21.6,4.4 21.6,5.4 V19 Q21.6,20 20.6,20 H2.6 Q1.6,20 1.6,19 Z" stroke="#1574c4" stroke-width="1.8" fill="none" stroke-linejoin="round"/><path d="M11.6,17.2 V10 M8.1,13.2 L11.6,9.6 L15.1,13.2" stroke="#1574c4" stroke-width="2" fill="none"/></svg>
<div class="a" style="left:506.6px;top:103.6px;width:86.7px;height:22.4px;background:#363a3e;border-radius:4px"></div>
<svg class="a" style="left:545px;top:125px;" width="12" height="7" viewBox="0 0 12 7"><path d="M0.8,0 L5.8,5.8 L10.8,0 Z" fill="#363a3e"/></svg>
<div class="a" style="left:514.0px;top:108.96px;font-size:12.2px;color:#fff;font-weight:400;letter-spacing:-0.468px;-webkit-text-stroke:0.15px #fff">Folder Upload</div>
<div class="a" style="left:0;top:0;width:800px;height:488px;border:1px solid #1f77c9;pointer-events:none"></div>
</body></html>
